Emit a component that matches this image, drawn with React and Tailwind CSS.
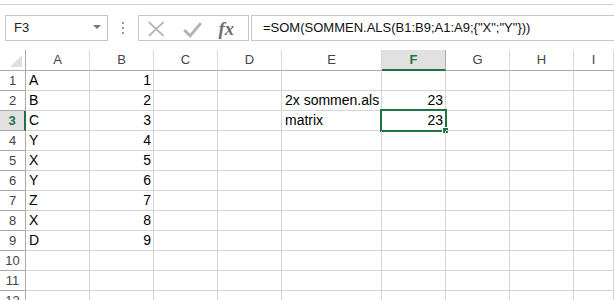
import React from 'react';

const cols = ['A', 'B', 'C', 'D', 'E', 'F', 'G', 'H', 'I'];

const data = {
  1: { A: 'A', B: '1' },
  2: { A: 'B', B: '2', E: '2x sommen.als', F: '23' },
  3: { A: 'C', B: '3', E: 'matrix', F: '23' },
  4: { A: 'Y', B: '4' },
  5: { A: 'X', B: '5' },
  6: { A: 'Y', B: '6' },
  7: { A: 'Z', B: '7' },
  8: { A: 'X', B: '8' },
  9: { A: 'D', B: '9' },
};

const numeric = ['B', 'F'];

const FormulaBar = () => (
  <div className="flex items-start pt-[10px] pb-[9px] pl-[5px]">
    <div className="relative flex h-[26px] w-[103px] items-center border border-[#c6c6c6] pl-[8px] text-[13px] text-[#222]">
      F3
      <div className="absolute right-[6px] top-[9px] h-0 w-0 border-x-[4px] border-t-[4px] border-x-transparent border-t-[#777]" />
    </div>
    <div className="flex h-[26px] w-[30px] flex-col items-center justify-center gap-[3px]">
      <div className="h-[2px] w-[2px] bg-[#999]" />
      <div className="h-[2px] w-[2px] bg-[#999]" />
      <div className="h-[2px] w-[2px] bg-[#999]" />
    </div>
    <div className="flex h-[26px] w-[111px] items-center border border-[#c6c6c6]">
      <svg width="111" height="24" viewBox="0 0 111 24">
        <path d="M10 6 L25 20 M25 6 L10 20" stroke="#b4b4b4" strokeWidth="2" fill="none" />
        <path d="M46 14 L52 20 L63 7" stroke="#b4b4b4" strokeWidth="3" fill="none" />
        <text x="81" y="19" fontFamily="Liberation Serif, serif" fontStyle="italic" fontWeight="bold" fontSize="19" fill="#6e6e6e">fx</text>
      </svg>
    </div>
    <div className="ml-[2px] flex h-[26px] flex-1 items-center whitespace-nowrap border border-r-0 border-[#c6c6c6] pl-[11px] text-[13px] text-[#111]">
      =SOM(SOMMEN.ALS(B1:B9;A1:A9;{'{'}"X";"Y"{'}'}))
    </div>
  </div>
);

const App = () => {
  return (
    <div className="h-[300px] w-[614px] overflow-hidden bg-white" style={{ fontFamily: '"Liberation Sans", Arial, sans-serif' }}>
      <div className="h-[5px] border-b border-[#d4d4d4]" />
      <FormulaBar />
      <div className="grid grid-cols-[26px_64px_64px_64px_64px_100px_64px_64px_64px_1fr]">
        <div className="relative h-[21px] border-r border-b border-[#ababab]">
          <div className="absolute bottom-[3px] right-[3px] h-0 w-0 border-b-[12px] border-l-[12px] border-l-transparent border-b-[#dfdfdf]" />
        </div>
        {cols.map((c) =>
          c === 'F' ? (
            <div key={c} className="flex h-[21px] items-center justify-center border-r border-b-2 border-r-[#ababab] border-b-[#217346] bg-[#e1e1e1] text-[13px] font-bold text-[#217346]">
              {c}
            </div>
          ) : (
            <div key={c} className="flex h-[21px] items-center justify-center border-r border-b border-r-[#dadada] border-b-[#ababab] text-[13px] text-[#444]">
              {c}
            </div>
          )
        )}
        {Array.from({ length: 12 }, (_, i) => i + 1).map((r) => (
          <React.Fragment key={r}>
            {r === 3 ? (
              <div className="flex h-[20px] items-center justify-center border-r-2 border-b border-r-[#217346] border-b-[#ababab] bg-[#e1e1e1] text-[13px] font-bold text-[#217346]">
                {r}
              </div>
            ) : (
              <div className="flex h-[20px] items-center justify-center border-r border-b border-[#ababab] text-[13px] text-[#444]">
                {r}
              </div>
            )}
            {cols.map((c) => {
              const v = data[r] && data[r][c];
              return (
                <div
                  key={c}
                  className={`relative flex h-[20px] items-center whitespace-nowrap border-r border-b border-[#d4d4d4] text-[14px] text-black ${numeric.includes(c) ? 'justify-end pr-[2px]' : 'pl-[3px]'}`}
                >
                  {v}
                  {r === 3 && c === 'F' && (
                    <>
                      <div className="absolute -left-[2px] -top-[2px] -right-[2px] -bottom-[2px] border-2 border-[#217346]" />
                      <div className="absolute -right-[4px] -bottom-[4px] h-[7px] w-[7px] border border-white bg-[#217346]" />
                    </>
                  )}
                </div>
              );
            })}
          </React.Fragment>
        ))}
      </div>
    </div>
  );
};

export default App;
